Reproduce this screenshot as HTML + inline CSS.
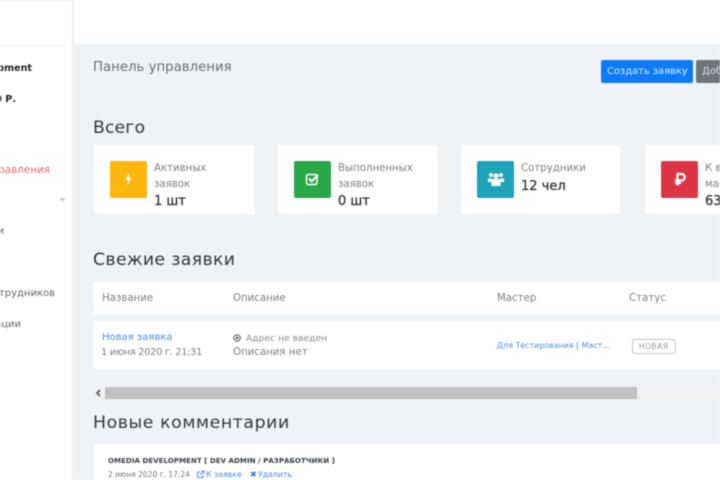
<!DOCTYPE html>
<html lang="ru"><head><meta charset="utf-8"><title>Панель управления</title>
<style>
html,body{margin:0;padding:0}
body{width:720px;height:480px;overflow:hidden;background:#fff}
#p{position:relative;width:720px;height:480px;overflow:hidden;background:#eff3f7;font-family:"DejaVu Sans","Liberation Sans",sans-serif;filter:blur(.45px)}
#p div{position:absolute}
.t{white-space:nowrap;line-height:1;position:absolute;margin-top:1px}
.c{background:#fff}
.ic{border-radius:2px}
.h{font-size:17.3px;color:#33383c;letter-spacing:.1px}
.l{font-size:10.2px;color:#7d8083}
.v{font-size:13px;color:#33383c;-webkit-text-stroke:.3px #33383c}
.s{font-size:10px;color:#60656a}
.b{font-weight:700;font-size:9.6px;color:#222}
</style></head><body><div id="p">
<div class="c" style="left:0;top:0;width:73px;height:480px;border-right:1px solid #f0f2f4;box-sizing:border-box"></div>
<div class="c" style="left:74px;top:0;width:646px;height:44px"></div>
<div style="left:0;top:0;width:73px;height:1px;background:#f0f0f0"></div>
<div style="left:0;top:45px;width:66px;height:1px;background:#eee"></div>

<span class="t b" style="right:688px;top:63px">OMedia Development</span>
<span class="t b" style="right:704px;top:94px">0 Р.</span>
<span class="t" style="right:670px;top:164px;font-size:10.4px;color:#e86a70">Панель управления</span>
<span class="t" style="left:59px;top:195px;font-size:8px;color:#999">+</span>
<span class="t s" style="right:716px;top:226px">и</span>
<span class="t s" style="right:665px;top:288px">Зарплаты сотрудников</span>
<span class="t s" style="right:699px;top:319px">Операции</span>

<span class="t" style="left:93px;top:60px;font-size:13.3px;color:#6a6f74">Панель управления</span>
<div style="left:601px;top:60px;width:92px;height:23px;background:#0d7bf8;border-radius:2px"></div>
<span class="t" style="left:607px;top:66px;font-size:9.9px;color:#d8ebff">Создать заявку</span>
<div style="left:696px;top:60px;width:30px;height:23px;background:#6c757d;border-radius:2px"></div>
<span class="t" style="left:702px;top:66px;font-size:10px;color:#ddd">Добавить</span>

<span class="t h" style="left:93px;top:119px">Всего</span>

<div class="c" style="left:94px;top:145px;width:160px;height:69px"></div>
<div class="ic" style="left:110px;top:161px;width:37px;height:37px;background:#fdb70d"></div>
<svg style="position:absolute;left:124px;top:172px" width="9" height="15" viewBox="0 0 9 15"><path d="M5 1 1.500 8H4L3 14 7.500 6H5z" fill="#fff"/></svg>
<span class="t l" style="left:154px;top:163px">Активных</span>
<span class="t l" style="left:154px;top:179px">заявок</span>
<span class="t v" style="left:154px;top:194px">1 шт</span>

<div class="c" style="left:278px;top:145px;width:159px;height:69px"></div>
<div class="ic" style="left:294px;top:161px;width:37px;height:37px;background:#2aa748"></div>
<svg style="position:absolute;left:305px;top:172px" width="15" height="15" viewBox="0 0 15 15"><rect x="1.500" y="2.500" width="10.500" height="10" rx="2" fill="none" stroke="#fff" stroke-width="1.500"/><path d="M4 6.500 6.700 9.300 13 3" fill="none" stroke="#fff" stroke-width="2"/></svg>
<span class="t l" style="left:338px;top:163px">Выполненных</span>
<span class="t l" style="left:338px;top:179px">заявок</span>
<span class="t v" style="left:338px;top:194px">0 шт</span>

<div class="c" style="left:461px;top:145px;width:159px;height:69px"></div>
<div class="ic" style="left:477px;top:161px;width:37px;height:37px;background:#1ea3b8"></div>
<svg style="position:absolute;left:487px;top:172px" width="18" height="15" viewBox="0 0 18 15"><g fill="#fff"><circle cx="4" cy="3" r="2"/><circle cx="14" cy="3" r="2"/><circle cx="9" cy="4" r="2.600"/><path d="M1 6.500h4v3.500H1zM13 6.500h4v3.500h-4z"/><path d="M4.500 8.500Q4.500 7 6 7h6q1.500 0 1.500 1.500V14h-9z"/></g></svg>
<span class="t l" style="left:521px;top:163px">Сотрудники</span>
<span class="t v" style="left:521px;top:179px">12 чел</span>

<div class="c" style="left:645px;top:145px;width:80px;height:69px"></div>
<div class="ic" style="left:661px;top:161px;width:37px;height:37px;background:#dc3545"></div>
<svg style="position:absolute;left:673px;top:172px" width="13" height="15" viewBox="0 0 13 15"><path d="M4.500 13.500V2H8.500a3 3 0 0 1 0 6.500H2M2 11H8" fill="none" stroke="#fff" stroke-width="2.200"/></svg>
<span class="t l" style="left:705px;top:163px">К выплате</span>
<span class="t l" style="left:705px;top:179px">мастерам</span>
<span class="t v" style="left:705px;top:194px">63000</span>

<span class="t h" style="left:93px;top:251px;letter-spacing:.35px">Свежие заявки</span>

<div class="c" style="left:93px;top:282px;width:627px;height:32px"></div>
<span class="t l" style="left:102px;top:293px">Название</span>
<span class="t l" style="left:233px;top:293px">Описание</span>
<span class="t l" style="left:497px;top:293px">Мастер</span>
<span class="t l" style="left:629px;top:293px">Статус</span>

<div class="c" style="left:93px;top:321px;width:627px;height:48px"></div>
<span class="t" style="left:102px;top:332px;font-size:10px;color:#4a8fe8">Новая заявка</span>
<span class="t l" style="left:101px;top:347px;font-size:9.8px;letter-spacing:-.3px">1 июня 2020 г. 21:31</span>
<svg style="position:absolute;left:233px;top:334px" width="8" height="8" viewBox="0 0 8 8"><circle cx="4" cy="4" r="3.200" fill="none" stroke="#666" stroke-width="1.200"/><circle cx="4" cy="4" r="1.400" fill="#666"/></svg>
<span class="t" style="left:246px;top:333px;font-size:9.200px;color:#8a8d90">Адрес не введен</span>
<span class="t l" style="left:233px;top:347px">Описания нет</span>
<span class="t" style="left:497px;top:341px;font-size:7.900px;color:#4a8fe8">Для Тестирования [ Маст...</span>
<div style="left:632px;top:339px;width:42px;height:13px;border:1px solid #c6c6c6;border-radius:3px"></div>
<span class="t" style="left:639px;top:342px;font-size:7.500px;letter-spacing:.5px;color:#999">НОВАЯ</span>

<div style="left:93px;top:387px;width:627px;height:12px;background:#f1f1f1"></div>
<div style="left:105px;top:387px;width:532px;height:12px;background:#c1c1c1"></div>
<svg style="position:absolute;left:95px;top:389px" width="7" height="8" viewBox="0 0 7 8"><path d="M5 1 2 4l3 3" fill="none" stroke="#505050" stroke-width="1.600"/></svg>

<span class="t h" style="left:93px;top:414px;letter-spacing:.6px">Новые комментарии</span>

<div class="c" style="left:94px;top:444px;width:626px;height:36px"></div>
<span class="t" style="left:108px;top:456px;font-size:7.100px;font-weight:700;color:#3c4044">OMEDIA DEVELOPMENT [ DEV ADMIN / РАЗРАБОТЧИКИ ]</span>
<span class="t" style="left:108px;top:470px;font-size:7.500px;color:#777">2 июня 2020 г. 17:24</span>
<svg style="position:absolute;left:196px;top:470px" width="9" height="9" viewBox="0 0 9 9"><path d="M7 5v2.500H1.500V2H4M4 5l4-4M5.500 1H8v2.500" fill="none" stroke="#4a8fe8" stroke-width="1"/></svg>
<span class="t" style="left:206px;top:470px;font-size:7.800px;color:#4a8fe8">К заявке</span>
<span class="t" style="left:250px;top:470px;font-size:8px;font-weight:700;color:#3b78d8">✖</span>
<span class="t" style="left:258px;top:470px;font-size:7.800px;color:#4a8fe8">Удалить</span>
</div></body></html>
